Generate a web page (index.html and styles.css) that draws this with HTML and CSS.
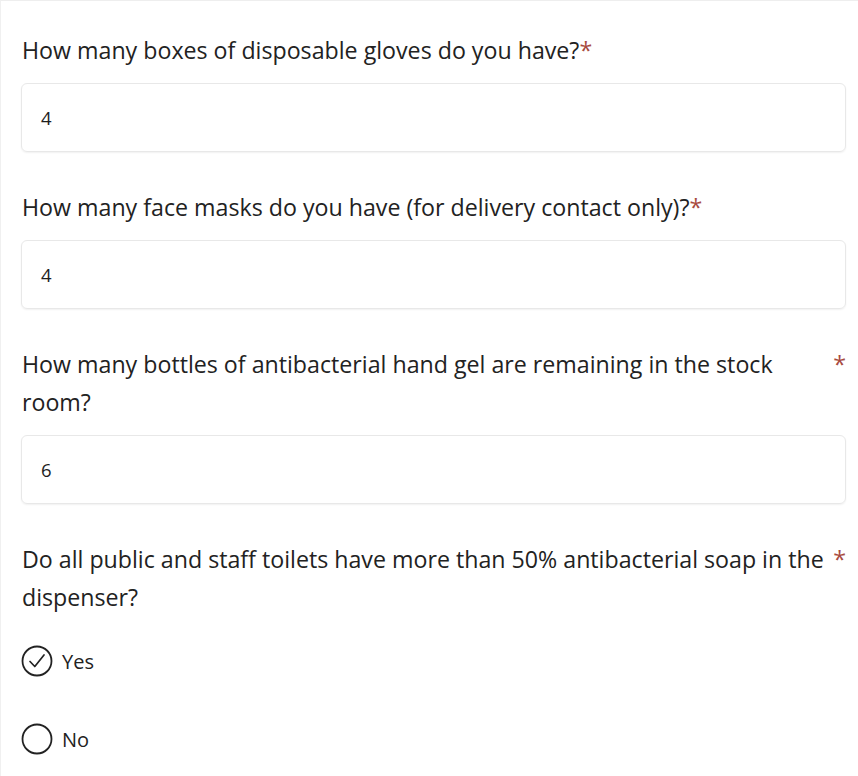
FILE: index.html
```html
<!DOCTYPE html>
<html lang="en">
<head>
<meta charset="utf-8">
<title>Stock check</title>
<link rel="stylesheet" href="styles.css">
</head>
<body>
<div class="form">
  <div class="question">
    <div class="label"><span class="text">How many boxes of disposable gloves do you have?</span><span class="req">*</span></div>
    <div class="input">4</div>
  </div>
  <div class="question">
    <div class="label"><span class="text">How many face masks do you have (for delivery contact only)?</span><span class="req">*</span></div>
    <div class="input">4</div>
  </div>
  <div class="question">
    <div class="label"><span class="text">How many bottles of antibacterial hand gel are remaining in the stock room?</span><span class="req">*</span></div>
    <div class="input">6</div>
  </div>
  <div class="question">
    <div class="label"><span class="text">Do all public and staff toilets have more than 50% antibacterial soap in the dispenser?</span><span class="req">*</span></div>
    <div class="options">
      <div class="option">
        <svg class="radio" viewBox="0 0 32 32" width="32" height="32" aria-hidden="true">
          <circle cx="16" cy="16" r="14.5" fill="none" stroke="#222" stroke-width="1.8"/>
          <path d="M9 16.5 L13.8 21.5 L23 10" fill="none" stroke="#222" stroke-width="1.7" stroke-linecap="round" stroke-linejoin="round"/>
        </svg>
        <span class="option-text">Yes</span>
      </div>
      <div class="option">
        <svg class="radio" viewBox="0 0 32 32" width="32" height="32" aria-hidden="true">
          <circle cx="16" cy="16" r="14.5" fill="none" stroke="#222" stroke-width="1.8"/>
        </svg>
        <span class="option-text">No</span>
      </div>
    </div>
  </div>
</div>
</body>
</html>
```
FILE: styles.css
```css
html, body {
  margin: 0;
  padding: 0;
  background: #ffffff;
}

body {
  font-family: "Open Sans", "Liberation Sans", sans-serif;
  color: #222222;
}

.form {
  width: 858px;
  height: 776px;
  box-sizing: border-box;
  border-top: 1px solid #eeeeee;
  border-left: 1px solid #f0f0f0;
  padding: 30px 12px 0 20px;
}

.question {
  margin-bottom: 36px;
}

.label {
  display: flex;
  align-items: flex-start;
  font-size: 23.2px;
  line-height: 38px;
  margin-bottom: 14px;
  padding-left: 1px;
}

.text {
  flex: 0 1 auto;
}

.req {
  flex: none;
  color: #a84b3f;
}

.input {
  height: 69px;
  box-sizing: border-box;
  border: 1px solid #e8e8e8;
  border-radius: 6px;
  box-shadow: 0 1px 2px rgba(0, 0, 0, 0.06);
  padding-left: 19px;
  display: flex;
  align-items: center;
  font-size: 18.5px;
  color: #1e1e1e;
}

.options {
  display: flex;
  flex-direction: column;
  gap: 46px;
  padding-top: 15px;
}

.option {
  display: flex;
  align-items: center;
  gap: 9px;
  height: 32px;
}

.radio {
  flex: none;
  display: block;
}

.option-text {
  font-size: 20px;
}
```
